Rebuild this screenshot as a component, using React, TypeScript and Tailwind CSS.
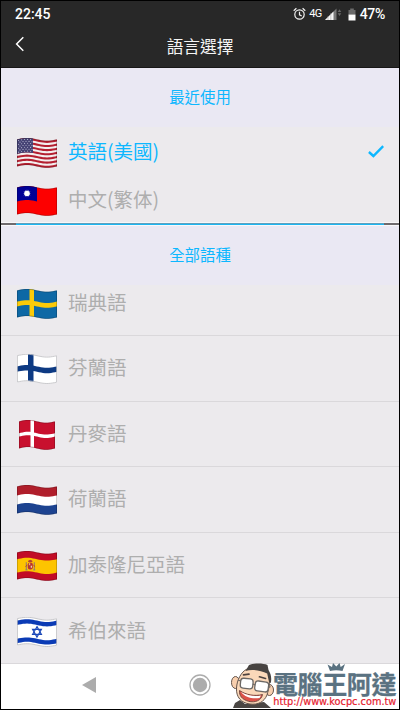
import React from "react";

const W = 40;

function ripple(x: number, w: number) {
  return 1.4 - 1.4 * Math.sin((2 * Math.PI * x) / w);
}

// Outline of a rectangle whose top and bottom edges follow the cloth's ripple.
function cloth(x0: number, x1: number, y0: number, y1: number, w = W) {
  const top: string[] = [];
  const bottom: string[] = [];
  const n = 20;
  for (let i = 0; i <= n; i++) {
    const x = x0 + ((x1 - x0) * i) / n;
    top.push(`${x.toFixed(2)},${(y0 + ripple(x, w)).toFixed(2)}`);
    bottom.unshift(`${x.toFixed(2)},${(y1 + ripple(x, w)).toFixed(2)}`);
  }
  return [...top, ...bottom].join(" ");
}

type BandProps = { x?: [number, number]; y?: [number, number]; fill: string; w?: number };

function Band({ x, y = [0, 27], fill, w = W }: BandProps) {
  const [a, b] = x ?? [0, w];
  return <polygon points={cloth(a, b, y[0], y[1], w)} fill={fill} />;
}

function Flag({ children, w = W, edge = "#00000040" }: { children: React.ReactNode; w?: number; edge?: string }) {
  return (
    <span className="flex w-10 shrink-0 justify-center pt-[2px]">
      <svg width={w} height="30" viewBox={`0 0 ${w} 30`} className="shrink-0">
        {children}
        <polygon points={cloth(0.4, w - 0.4, 0.3, 26.7, w)} fill="none" stroke={edge} strokeWidth="0.8" />
      </svg>
    </span>
  );
}

function UsFlag() {
  const s = 27 / 13;
  return (
    <Flag>
      <Band fill="#f3eeee" />
      {[0, 2, 4, 6, 8, 10, 12].map((i) => (
        <Band key={i} y={[i * s, (i + 1) * s]} fill="#b41f30" />
      ))}
      <Band x={[0, 16]} y={[0, 14.5]} fill="#454274" />
      {[0, 1, 2, 3, 4, 5, 6].map((r) =>
        [0, 1, 2, 3, 4].map((c) => {
          const x = 1.6 + c * 3 + (r % 2) * 1.4;
          return <circle key={`${r}-${c}`} cx={x} cy={1.4 + r * 1.95 + ripple(x, W)} r="0.55" fill="#bbbbd4" />;
        }),
      )}
    </Flag>
  );
}

function TaiwanFlag() {
  return (
    <Flag>
      <Band fill="#fd0000" />
      <Band x={[0, 20]} y={[0, 14]} fill="#000096" />
      {Array.from({ length: 12 }, (_, i) => (
        <path key={i} d="M9.3 7.4 L10 3.3 L10.7 7.4Z" fill="#fff" transform={`rotate(${i * 30} 10 7.4)`} />
      ))}
      <circle cx="10" cy="7.4" r="2.7" fill="#fff" />
    </Flag>
  );
}

function NordicFlag({ field, cross, w = W, at, bar, edge }: { field: string; cross: string; w?: number; at: [number, number]; bar: [number, number]; edge?: string }) {
  return (
    <Flag w={w} edge={edge}>
      <Band w={w} fill={field} />
      <Band w={w} x={at} fill={cross} />
      <Band w={w} y={bar} fill={cross} />
    </Flag>
  );
}

function DutchFlag() {
  return (
    <Flag>
      <Band fill="#fff" />
      <Band y={[0, 9]} fill="#b01e2b" />
      <Band y={[18, 27]} fill="#1d4390" />
    </Flag>
  );
}

function SpanishFlag() {
  return (
    <Flag>
      <Band fill="#c20c26" />
      <Band y={[6.8, 20.2]} fill="#fdc400" />
      <g transform="translate(8.5 8.8)">
        <path d="M2.5 2.2 L3 0.6 L4.8 0 L6.6 0.6 L7 2.2Z" fill="#b5452e" />
        <rect x="2.3" y="2.6" width="5" height="7" rx="2" fill="#b83332" />
        <rect x="3.4" y="3.4" width="1.3" height="2" fill="#e9bd63" />
        <rect x="5.2" y="5.9" width="1.3" height="2" fill="#e8d3b5" />
        <path d="M0.8 2.4V10M8.8 2.4V10" stroke="#9b7a6c" strokeWidth="1.1" />
        <path d="M0 6.7L1.8 5.4M7.9 5.4L9.6 6.7" stroke="#b83332" strokeWidth="0.9" />
        <path d="M0 10.1H2M7.8 10.1H9.7" stroke="#687595" strokeWidth="0.9" />
      </g>
    </Flag>
  );
}

function IsraelFlag() {
  return (
    <Flag edge="#b9b9bd">
      <Band fill="#fff" />
      <Band y={[2.2, 6.6]} fill="#0b3bb5" />
      <Band y={[20.4, 24.8]} fill="#0b3bb5" />
      <path d="M20 9.6L24.4 17.3H15.6ZM20 20.1L15.6 12.3H24.4Z" fill="none" stroke="#1a47b8" strokeWidth="1.2" />
    </Flag>
  );
}

function SectionTitle({ children }: { children: React.ReactNode }) {
  return (
    <h2 className="flex h-[59px] shrink-0 items-center justify-center bg-[#eae8f3] pb-px text-[15.4px] text-[#0db7ff]">
      {children}
    </h2>
  );
}

function Label({ children, active }: { children: React.ReactNode; active?: boolean }) {
  return (
    <span className={`ml-[11px] pb-[2px] text-[19.5px] leading-[28px] whitespace-nowrap ${active ? "text-[#0db7ff]" : "text-[#aeaeae]"}`}>
      {children}
    </span>
  );
}

function StatusBar() {
  return (
    <div className="flex h-[26px] items-center justify-between pr-[14px] pl-[14px] font-[Roboto,sans-serif] text-[14px] font-medium text-white">
      <span>22:45</span>
      <div className="flex items-center">
        <svg width="13" height="14" viewBox="0 0 13 14" fill="none" stroke="#f2f2f2" strokeWidth="1.2" className="mr-[3px]">
          <circle cx="6.5" cy="7.5" r="4.7" />
          <path d="M6.5 4.8V7.8L8.7 9.1M0.7 3.7L3.4 1.3M12.3 3.7L9.6 1.3" />
        </svg>
        <span className="text-[11px] font-normal tracking-[-0.6px]">4G</span>
        <svg width="17" height="13" viewBox="0 0 17 13" className="ml-[3px]">
          <path d="M0 12L11.5 0.5V12Z" fill="#777" />
          <path d="M0 12L8.5 3.5V12Z" fill="#f5f5f5" />
          <path d="M3 8V12M5.8 5V12" stroke="#999" strokeWidth="0.5" />
          <path d="M14.5 1.3L16.3 4H12.7ZM14.5 8L16.3 5.3H12.7Z" fill="#666" />
        </svg>
        <svg width="8" height="13" viewBox="0 0 8 13" className="mr-1 ml-[6px]">
          <path d="M0.5 2H2.2V0.5H5.8V2H7.5V7H0.5Z" fill="#6b6b6b" />
          <path d="M0.5 6.6H7.5V12.5H0.5Z" fill="#fff" />
        </svg>
        <span className="tracking-[-0.3px]">47%</span>
      </div>
    </div>
  );
}

const languages: [string, React.ReactNode][] = [
  ["芬蘭語", <NordicFlag field="#fff" cross="#0d3a83" at={[11, 16.5]} bar={[11, 16.4]} edge="#bdbdc0" />],
  ["丹麥語", <NordicFlag w={36} field="#c8102e" cross="#fff" at={[11.5, 15]} bar={[11.8, 15.2]} />],
  ["荷蘭語", <DutchFlag />],
  ["加泰隆尼亞語", <SpanishFlag />],
  ["希伯來語", <IsraelFlag />],
];

function Mascot() {
  return (
    <svg width="46" height="46" viewBox="0 0 46 46" className="shrink-0" strokeLinejoin="round">
      <path d="M3 46L5 41L10 38L15 42L34 40L41 46Z" fill="#4a4643" />
      <ellipse cx="5.5" cy="20.5" rx="4" ry="6" fill="#f8cfae" stroke="#65544b" strokeWidth="1" />
      <ellipse cx="39.5" cy="28" rx="4" ry="5.5" fill="#f8cfae" stroke="#65544b" strokeWidth="1" />
      <path d="M17 7C25 4 34 6 39 11C41 17 39 26 37 33C34 40 28 43 20 42C11 41 6 35 6.5 26C7 18 11 10 17 7Z" fill="#fbd8b9" stroke="#65544b" strokeWidth="1" />
      <path d="M15.5 9L19 3C24 1 33 1 37.5 3L38.5 8C41 12 41.8 16 40.8 21L39 20L37.2 11.5C31 8.5 22 6.8 15.5 9Z" fill="#474341" />
      <path d="M13.5 12.8L19 12.2M29.5 14.8L35.5 16.5" stroke="#4d4340" strokeWidth="1.7" strokeLinecap="round" />
      <rect x="10.5" y="16.5" width="12.5" height="10" rx="3" fill="#fff" stroke="#6c6865" strokeWidth="1.3" transform="rotate(6 16 21)" />
      <rect x="25" y="19.5" width="13.5" height="10" rx="3" fill="#fff" stroke="#6c6865" strokeWidth="1.3" transform="rotate(8 32 24)" />
      <path d="M22.8 22L25.2 23M38.5 25.5L40.5 24.5M8 18L10.6 19" stroke="#6c6865" strokeWidth="1.2" />
      <path d="M9.5 28.5C16 33 25 34.5 32.5 32.5C31.5 38.5 25 41 18.5 39.3C12 37.5 9 33.5 9.5 28.5Z" fill="#dc5148" stroke="#6b453c" strokeWidth="0.9" />
      <path d="M11 30C17 33.4 25 35 31 33.6L29.5 36C22 37 15 35.4 11 30Z" fill="#fff" />
    </svg>
  );
}

function Watermark() {
  return (
    <div className="absolute bottom-px left-[229px] flex items-end">
      <Mascot />
      <svg width="124" height="48" viewBox="0 0 124 48" className="-ml-[3px] overflow-visible">
        <text x="0" y="34" fontSize="25" fontWeight="700" textLength="123.5" fill="#5a7281" stroke="#5a7281" strokeWidth="0.3">
          電腦王阿達
        </text>
        <path d="M57 11L54.5 4.5L59 7L60 3L63.3 6.5L66.5 3L67.7 7L72 4L69.5 11Q63 9.3 57 11Z" fill="#5a7281" />
        <text x="0.3" y="44.5" fontSize="10" textLength="123" lengthAdjust="spacingAndGlyphs" fill="#e5202e" stroke="#e5202e" strokeWidth="0.2" fontFamily="'DejaVu Sans', sans-serif">
          http://www.kocpc.com.tw
        </text>
      </svg>
    </div>
  );
}

export default function App() {
  return (
    <div className="relative flex h-[710px] w-[400px] flex-col overflow-hidden border border-black bg-[#eceaed] font-['Noto_Sans_CJK_TC',sans-serif]">
      <header className="h-[67px] shrink-0 border-b border-[#181717] bg-[#282828]">
        <StatusBar />
        <div className="grid h-10 grid-cols-[40px_1fr_40px] items-center">
          <svg width="10" height="16" viewBox="0 0 10 16" fill="none" stroke="#fff" strokeWidth="1.5" className="mb-[6px] ml-[14px]">
            <path d="M8.3 1.3L1.6 8L8.3 14.7" />
          </svg>
          <h1 className="text-center text-[16.7px] text-[#f4f4f4]">語言選擇</h1>
        </div>
      </header>

      <SectionTitle>最近使用</SectionTitle>
      <div className="flex h-[49px] shrink-0 items-center px-4">
        <UsFlag />
        <Label active>英語(美國)</Label>
        <svg width="16" height="13" viewBox="0 0 16 13" fill="none" stroke="#0db7ff" strokeWidth="2.4" className="-mr-px ml-auto">
          <path d="M0.9 7L5.4 11L15.2 1.2" />
        </svg>
      </div>
      <div className="flex h-[46px] shrink-0 items-center px-4 pt-[2px]">
        <TaiwanFlag />
        <Label>中文(繁体)</Label>
      </div>
      <div className="h-1 shrink-0 border-y border-[#f8f7f9] bg-[#6e6a6d] px-[15px]">
        <div className="h-[2px] border-t border-[#5fa0bd] bg-[#1cb6f2]" />
      </div>

      <SectionTitle>全部語種</SectionTitle>
      <div className="flex min-h-0 flex-1 flex-col">
        <div className="flex h-[51px] shrink-0 items-center border-b border-[#dad8db] px-4 pb-[14px]">
          <NordicFlag field="#0d68a5" cross="#fbca08" at={[12.5, 17]} bar={[11.2, 16]} />
          <Label>瑞典語</Label>
        </div>
        {languages.map(([name, flag]) => (
          <div key={name} className="flex h-[65.6px] shrink-0 items-center border-b border-[#dad8db] px-4">
            {flag}
            <Label>{name}</Label>
          </div>
        ))}
        <nav className="grid flex-1 grid-cols-3 items-center bg-white pb-[2px]">
          <svg width="14" height="16" viewBox="0 0 14 16" className="ml-[81px]">
            <path d="M0 8L14 0V16Z" fill="#acacac" />
          </svg>
          <svg width="22" height="22" viewBox="0 0 22 22" className="justify-self-center">
            <circle cx="11" cy="11" r="10" fill="none" stroke="#acacac" strokeWidth="1.3" />
            <circle cx="11" cy="11" r="7.2" fill="#acacac" />
          </svg>
        </nav>
      </div>
      <Watermark />
    </div>
  );
}
